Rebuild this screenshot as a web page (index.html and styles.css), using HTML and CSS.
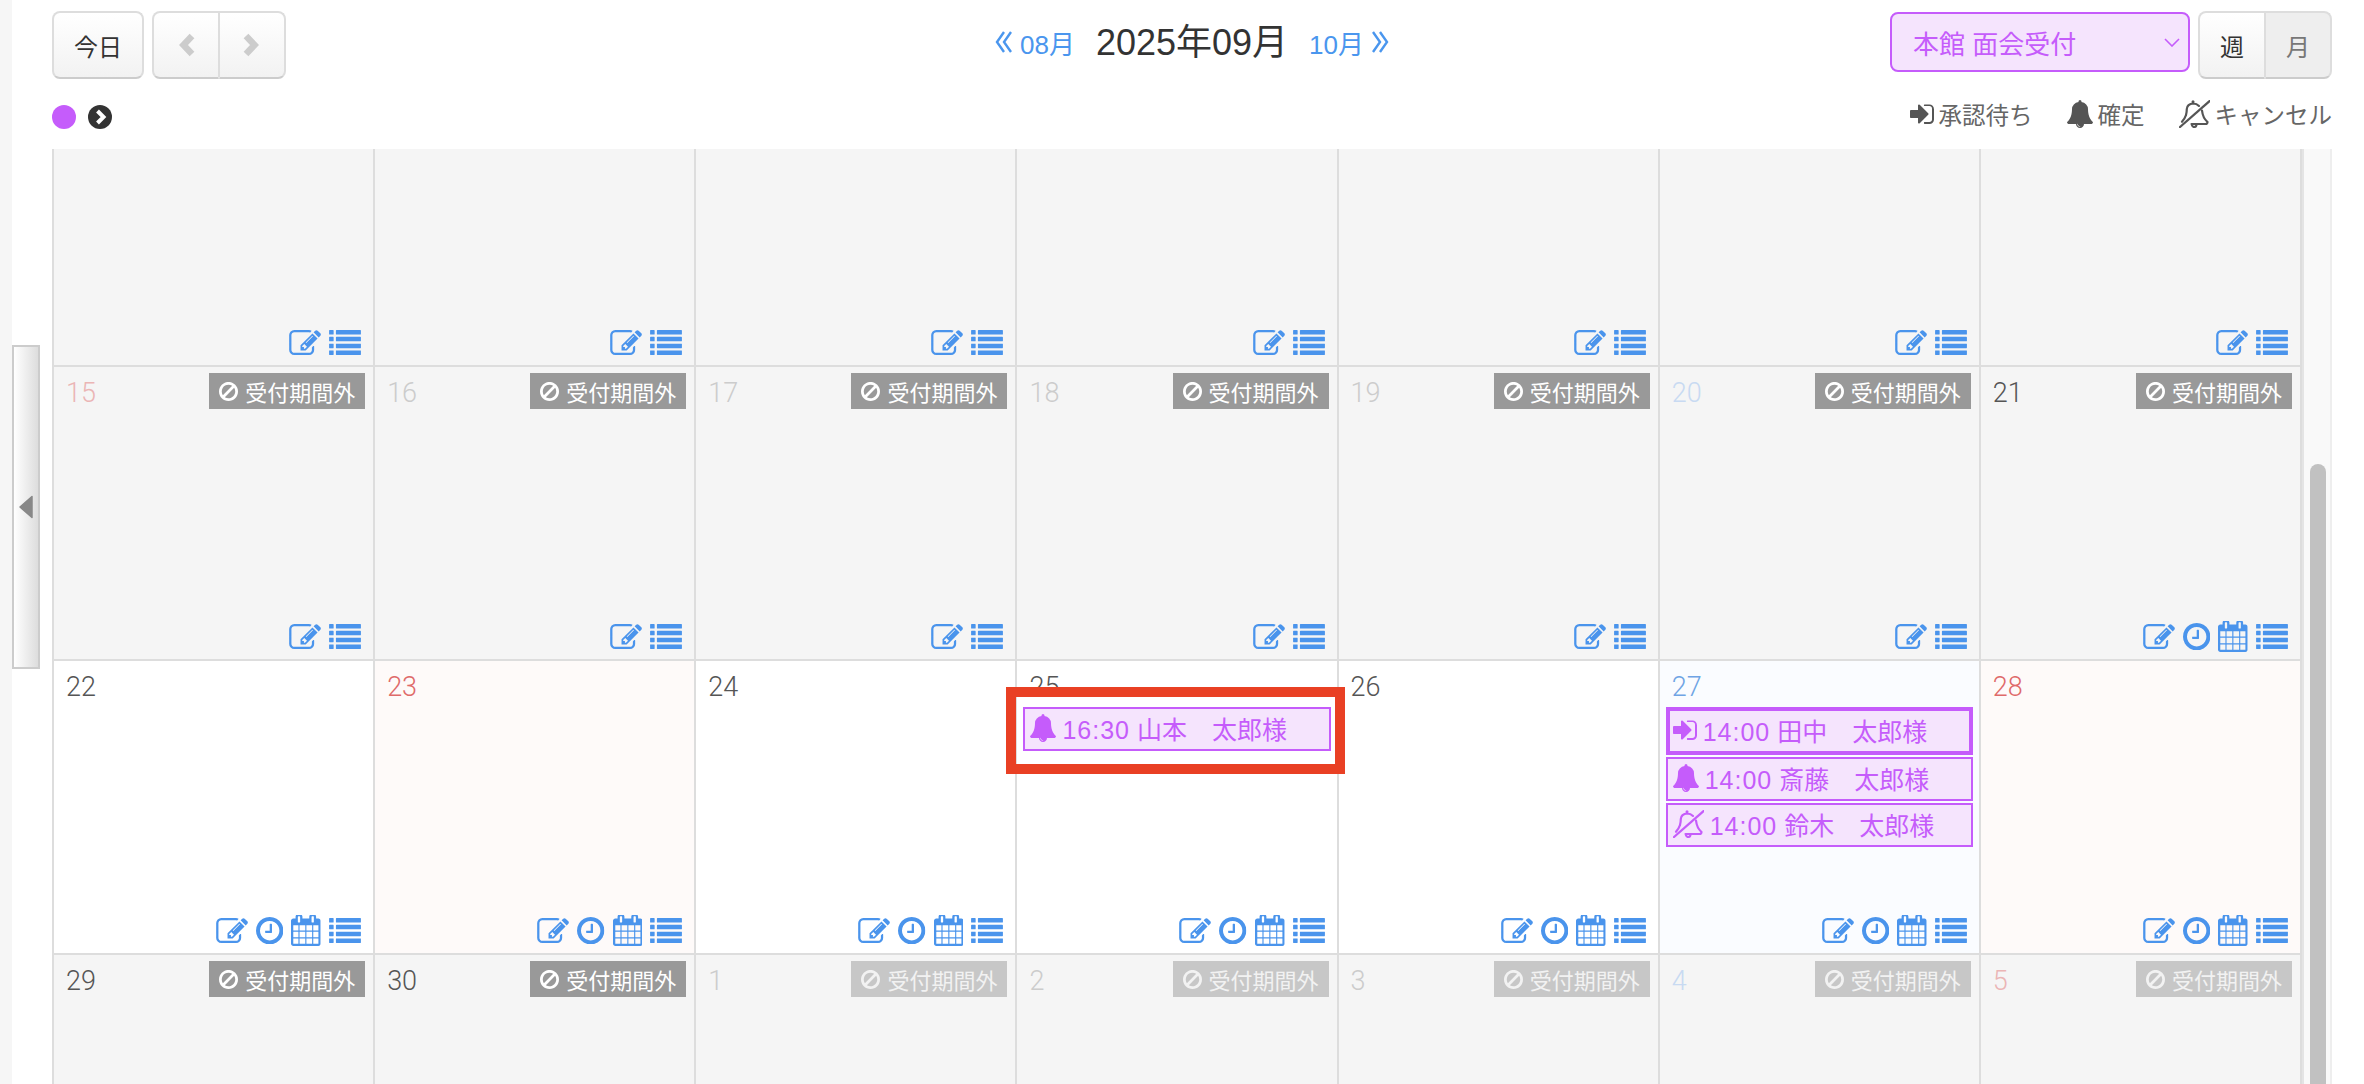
FILE: index.html
```html
<!DOCTYPE html>
<html lang="ja">
<head>
<meta charset="utf-8">
<title>カレンダー</title>
<link rel="stylesheet" href="styles.css">
</head>
<body>
<svg class="sprite" xmlns="http://www.w3.org/2000/svg">
  <symbol id="i-edit" viewBox="0 128 1784 1408"><path d="M888 1184l116-116-152-152-116 116v56h96v96h56zm440-720q-16-16-33 1l-350 350q-17 17-1 33t33-1l350-350q17-17 1-33zm80 594v190q0 119-84.5 203.5t-203.5 84.5h-832q-119 0-203.5-84.5t-84.5-203.5v-832q0-119 84.5-203.5t203.5-84.5h832q63 0 117 25 15 7 18 23 3 17-9 29l-49 49q-14 14-32 8-23-6-45-6h-832q-66 0-113 47t-47 113v832q0 66 47 113t113 47h832q66 0 113-47t47-113v-126q0-13 9-22l64-64q15-15 35-7t20 29zm-96-738l288 288-672 672h-288v-288zm444 132l-92 92-288-288 92-92q28-28 68-28t68 28l152 152q28 28 28 68t-28 68z"/></symbol>
  <symbol id="i-clock" viewBox="128 128 1536 1536"><path d="M1024 544v448q0 14-9 23t-23 9h-320q-14 0-23-9t-9-23v-64q0-14 9-23t23-9h224v-352q0-14 9-23t23-9h64q14 0 23 9t9 23zm416 352q0-148-73-273t-198-198-273-73-273 73-198 198-73 273 73 273 198 198 273 73 273-73 198-198 73-273zm224 0q0 209-103 385.5t-279.5 279.5-385.5 103-385.5-103-279.5-279.5-103-385.5 103-385.5 279.5-279.5 385.5-103 385.5 103 279.5 279.5 103 385.5z"/></symbol>
  <symbol id="i-cal" viewBox="64 64 1664 1728"><path d="M192 1664h288v-288h-288v288zm352 0h320v-288h-320v288zm-352-352h288v-320h-288v320zm352 0h320v-320h-320v320zm-352-384h288v-288h-288v288zm736 736h320v-288h-320v288zm-384-736h320v-288h-320v288zm768 736h288v-288h-288v288zm-384-352h320v-320h-320v320zm-352-864v-288q0-13-9.5-22.5t-22.5-9.5h-64q-13 0-22.5 9.5t-9.5 22.5v288q0 13 9.5 22.5t22.5 9.5h64q13 0 22.5-9.5t9.5-22.5zm736 864h288v-320h-288v320zm-384-384h320v-288h-320v288zm384 0h288v-288h-288v288zm32-480v-288q0-13-9.5-22.5t-22.5-9.5h-64q-13 0-22.5 9.5t-9.5 22.5v288q0 13 9.5 22.5t22.5 9.5h64q13 0 22.5-9.5t9.5-22.5zm384-64v1280q0 52-38 90t-90 38h-1408q-52 0-90-38t-38-90v-1280q0-52 38-90t90-38h128v-96q0-66 47-113t113-47h64q66 0 113 47t47 113v96h384v-96q0-66 47-113t113-47h64q66 0 113 47t47 113v96h128q52 0 90 38t38 90z"/></symbol>
  <symbol id="i-list" viewBox="0 128 1792 1408"><path d="M256 1312v192q0 13-9.5 22.5t-22.5 9.5h-192q-13 0-22.5-9.5t-9.5-22.5v-192q0-13 9.5-22.5t22.5-9.5h192q13 0 22.5 9.5t9.5 22.5zm0-384v192q0 13-9.5 22.5t-22.5 9.5h-192q-13 0-22.5-9.5t-9.5-22.5v-192q0-13 9.5-22.5t22.5-9.5h192q13 0 22.5 9.5t9.5 22.5zm0-384v192q0 13-9.5 22.5t-22.5 9.5h-192q-13 0-22.5-9.5t-9.5-22.5v-192q0-13 9.5-22.5t22.5-9.5h192q13 0 22.5 9.5t9.5 22.5zm1536 768v192q0 13-9.5 22.5t-22.5 9.5h-1344q-13 0-22.5-9.5t-9.5-22.5v-192q0-13 9.5-22.5t22.5-9.5h1344q13 0 22.5 9.5t9.5 22.5zm-1536-1152v192q0 13-9.5 22.5t-22.5 9.5h-192q-13 0-22.5-9.5t-9.5-22.5v-192q0-13 9.5-22.5t22.5-9.5h192q13 0 22.5 9.5t9.5 22.5zm1536 768v192q0 13-9.5 22.5t-22.5 9.5h-1344q-13 0-22.5-9.5t-9.5-22.5v-192q0-13 9.5-22.5t22.5-9.5h1344q13 0 22.5 9.5t9.5 22.5zm0-384v192q0 13-9.5 22.5t-22.5 9.5h-1344q-13 0-22.5-9.5t-9.5-22.5v-192q0-13 9.5-22.5t22.5-9.5h1344q13 0 22.5 9.5t9.5 22.5zm0-384v192q0 13-9.5 22.5t-22.5 9.5h-1344q-13 0-22.5-9.5t-9.5-22.5v-192q0-13 9.5-22.5t22.5-9.5h1344q13 0 22.5 9.5t9.5 22.5z"/></symbol>
  <symbol id="i-ban" viewBox="128 128 1536 1536"><path d="M1440 893q0-161-87-295l-754 753q137 89 297 89 111 0 211.5-43.5t173.5-116.5 116-174.5 43-212.5zm-999 299l755-754q-135-91-300-91-148 0-273 73t-198 199-73 274q0 162 89 299zm1223-299q0 157-61 300t-163.5 246-245 164-298.5 61-298.5-61-245-164-163.5-246-61-300 61-299.5 163.5-245.5 245-164 298.5-61 298.5 61 245 164 163.5 245.5 61 299.5z"/></symbol>
  <symbol id="i-signin" viewBox="0 256 1536 1280"><path d="M1184 896q0 26-19 45l-544 544q-19 19-45 19t-45-19-19-45v-288h-448q-26 0-45-19t-19-45v-384q0-26 19-45t45-19h448v-288q0-26 19-45t45-19 45 19l544 544q19 19 19 45zm352-352v704q0 119-84.5 203.5t-203.5 84.5h-320q-13 0-22.5-9.5t-9.5-22.5q0-4-1-20t-.5-26.5 3-23.5 10-19.5 20.5-6.5h320q66 0 113-47t47-113v-704q0-66-47-113t-113-47h-288-11.5-13-11.5q-8 0-14-2t-10-6-6.5-10-3-11-.5-14 .5-12.5 1-9q0-13 9.5-22.5t22.5-9.5h320q119 0 203.5 84.5t84.5 203.5z"/></symbol>
  <symbol id="i-bell" viewBox="64 0 1664 1792"><path d="M912 1696q0-16-16-16-59 0-101.5-42.5t-42.5-101.5q0-16-16-16t-16 16q0 73 51.5 124.5t124.5 51.5q16 0 16-16zm816-288q0 52-38 90t-90 38h-448q0 106-75 181t-181 75-181-75-75-181h-448q-52 0-90-38t-38-90q50-42 91-88t85-119.5 74.5-158.5 50-206 19.5-260q0-152 117-282.5t307-158.5q-8-19-8-39 0-40 28-68t68-28 68 28 28 68q0 20-8 39 190 28 307 158.5t117 282.5q0 139 19.5 260t50 206 74.5 158.5 85 119.5 91 88z"/></symbol>
  <symbol id="i-bellslash" viewBox="0 0 31 28">
    <g fill="none" stroke="currentColor" stroke-width="2.2" stroke-linecap="round">
      <path d="M7 15c.5-2 .8-4 .8-6C7.800 6 10.500 3.600 14 3.500c2.500 0 4.500 .8 6 2.400"/>
      <path d="M6.800 15.500C6 18 4.500 20.200 3 21.800"/>
      <path d="M23 10.500c.5 4.500 2 8.500 5.500 11.500 0 1-1 2-2 2H12.500"/>
      <path d="M13 25.300c.3 1 1.200 1.700 2.200 1.700s2-.7 2.200-1.700"/>
    </g>
    <circle cx="14" cy="1.800" r="1.500" fill="currentColor"/>
    <path d="M1 27 30.500 1.200" fill="none" stroke="currentColor" stroke-width="2.300" stroke-linecap="round"/>
  </symbol>
</svg>

<aside class="rail">
  <button class="rail-toggle" type="button" aria-label="サイドバーを閉じる">
    <svg class="rail-arrow" viewBox="0 0 14 24"><path d="M13 1.500v21L1 12z" fill="#888" stroke="#888" stroke-width="1.500" stroke-linejoin="round"/></svg>
  </button>
</aside>

<main class="main">
  <header class="topbar">
    <div class="topbar-left">
      <button class="btn btn-today" type="button">今日</button>
      <div class="btn-group">
        <button class="btn seg" type="button" aria-label="前へ"><svg class="nav-chevron" viewBox="0 0 18 26"><path d="M15 4 6.500 13l8.500 9" /></svg></button>
        <button class="btn seg" type="button" aria-label="次へ"><svg class="nav-chevron" viewBox="0 0 18 26"><path d="M3 4l8.500 9L3 22"/></svg></button>
      </div>
    </div>
    <div class="month-nav">
      <a class="month-link" href="#"><svg class="dbl" viewBox="0 0 18 22"><path d="M9 1 2 11l7 10M16 1 9 11l7 10"/></svg>08月</a>
      <h1 class="month-title">2025年09月</h1>
      <a class="month-link" href="#">10月<svg class="dbl" viewBox="0 0 18 22"><path d="M2 1l7 10-7 10M9 1l7 10-7 10"/></svg></a>
    </div>
    <div class="topbar-right">
      <div class="venue-select">本館&nbsp;面会受付<svg class="venue-caret" viewBox="0 0 16 9"><path d="M1 1l7 7 7-7"/></svg></div>
      <div class="btn-group">
        <button class="btn seg seg-view" type="button">週</button>
        <button class="btn seg seg-view seg-off" type="button">月</button>
      </div>
    </div>
  </header>

  <div class="legend-row">
    <div class="legend-dots">
      <span class="dot"></span>
      <svg class="dot-next" viewBox="0 0 24 24"><circle cx="12" cy="12" r="12" fill="#333"/><path d="M9.500 6l6 6-6 6" fill="none" stroke="#fff" stroke-width="4"/></svg>
    </div>
    <ul class="legend">
      <li class="legend-item"><svg class="ic-signin"><use href="#i-signin"/></svg>承認待ち</li>
      <li class="legend-item"><svg class="ic-bell"><use href="#i-bell"/></svg>確定</li>
      <li class="legend-item"><svg class="ic-bellslash"><use href="#i-bellslash"/></svg>キャンセル</li>
    </ul>
  </div>

  <section class="calendar">
    <div class="grid">
      <!-- row 1 -->
      <div class="cell off"><div class="tools"><svg class="ic-edit"><use href="#i-edit"/></svg><svg class="ic-list"><use href="#i-list"/></svg></div></div>
      <div class="cell off"><div class="tools"><svg class="ic-edit"><use href="#i-edit"/></svg><svg class="ic-list"><use href="#i-list"/></svg></div></div>
      <div class="cell off"><div class="tools"><svg class="ic-edit"><use href="#i-edit"/></svg><svg class="ic-list"><use href="#i-list"/></svg></div></div>
      <div class="cell off"><div class="tools"><svg class="ic-edit"><use href="#i-edit"/></svg><svg class="ic-list"><use href="#i-list"/></svg></div></div>
      <div class="cell off"><div class="tools"><svg class="ic-edit"><use href="#i-edit"/></svg><svg class="ic-list"><use href="#i-list"/></svg></div></div>
      <div class="cell off"><div class="tools"><svg class="ic-edit"><use href="#i-edit"/></svg><svg class="ic-list"><use href="#i-list"/></svg></div></div>
      <div class="cell off"><div class="tools"><svg class="ic-edit"><use href="#i-edit"/></svg><svg class="ic-list"><use href="#i-list"/></svg></div></div>

      <!-- row 2 -->
      <div class="cell off"><div class="head"><span class="date sun-dim">15</span><span class="badge"><svg class="ic-ban"><use href="#i-ban"/></svg>受付期間外</span></div><div class="tools"><svg class="ic-edit"><use href="#i-edit"/></svg><svg class="ic-list"><use href="#i-list"/></svg></div></div>
      <div class="cell off"><div class="head"><span class="date dim">16</span><span class="badge"><svg class="ic-ban"><use href="#i-ban"/></svg>受付期間外</span></div><div class="tools"><svg class="ic-edit"><use href="#i-edit"/></svg><svg class="ic-list"><use href="#i-list"/></svg></div></div>
      <div class="cell off"><div class="head"><span class="date dim">17</span><span class="badge"><svg class="ic-ban"><use href="#i-ban"/></svg>受付期間外</span></div><div class="tools"><svg class="ic-edit"><use href="#i-edit"/></svg><svg class="ic-list"><use href="#i-list"/></svg></div></div>
      <div class="cell off"><div class="head"><span class="date dim">18</span><span class="badge"><svg class="ic-ban"><use href="#i-ban"/></svg>受付期間外</span></div><div class="tools"><svg class="ic-edit"><use href="#i-edit"/></svg><svg class="ic-list"><use href="#i-list"/></svg></div></div>
      <div class="cell off"><div class="head"><span class="date dim">19</span><span class="badge"><svg class="ic-ban"><use href="#i-ban"/></svg>受付期間外</span></div><div class="tools"><svg class="ic-edit"><use href="#i-edit"/></svg><svg class="ic-list"><use href="#i-list"/></svg></div></div>
      <div class="cell off"><div class="head"><span class="date sat-dim">20</span><span class="badge"><svg class="ic-ban"><use href="#i-ban"/></svg>受付期間外</span></div><div class="tools"><svg class="ic-edit"><use href="#i-edit"/></svg><svg class="ic-list"><use href="#i-list"/></svg></div></div>
      <div class="cell off"><div class="head"><span class="date">21</span><span class="badge"><svg class="ic-ban"><use href="#i-ban"/></svg>受付期間外</span></div><div class="tools"><svg class="ic-edit"><use href="#i-edit"/></svg><svg class="ic-clock"><use href="#i-clock"/></svg><svg class="ic-cal"><use href="#i-cal"/></svg><svg class="ic-list"><use href="#i-list"/></svg></div></div>

      <!-- row 3 -->
      <div class="cell"><div class="head"><span class="date">22</span></div><div class="tools"><svg class="ic-edit"><use href="#i-edit"/></svg><svg class="ic-clock"><use href="#i-clock"/></svg><svg class="ic-cal"><use href="#i-cal"/></svg><svg class="ic-list"><use href="#i-list"/></svg></div></div>
      <div class="cell holiday"><div class="head"><span class="date red">23</span></div><div class="tools"><svg class="ic-edit"><use href="#i-edit"/></svg><svg class="ic-clock"><use href="#i-clock"/></svg><svg class="ic-cal"><use href="#i-cal"/></svg><svg class="ic-list"><use href="#i-list"/></svg></div></div>
      <div class="cell"><div class="head"><span class="date">24</span></div><div class="tools"><svg class="ic-edit"><use href="#i-edit"/></svg><svg class="ic-clock"><use href="#i-clock"/></svg><svg class="ic-cal"><use href="#i-cal"/></svg><svg class="ic-list"><use href="#i-list"/></svg></div></div>
      <div class="cell"><div class="head"><span class="date">25</span></div>
        <div class="event"><svg class="ic-bell"><use href="#i-bell"/></svg><span><span class="time">16:30</span> 山本　太郎様</span></div>
        <div class="highlight"></div>
        <div class="tools"><svg class="ic-edit"><use href="#i-edit"/></svg><svg class="ic-clock"><use href="#i-clock"/></svg><svg class="ic-cal"><use href="#i-cal"/></svg><svg class="ic-list"><use href="#i-list"/></svg></div></div>
      <div class="cell"><div class="head"><span class="date">26</span></div><div class="tools"><svg class="ic-edit"><use href="#i-edit"/></svg><svg class="ic-clock"><use href="#i-clock"/></svg><svg class="ic-cal"><use href="#i-cal"/></svg><svg class="ic-list"><use href="#i-list"/></svg></div></div>
      <div class="cell saturday"><div class="head"><span class="date blue">27</span></div>
        <div class="event event-pending"><svg class="ic-signin"><use href="#i-signin"/></svg><span><span class="time">14:00</span> 田中　太郎様</span></div>
        <div class="event"><svg class="ic-bell"><use href="#i-bell"/></svg><span><span class="time">14:00</span> 斎藤　太郎様</span></div>
        <div class="event"><svg class="ic-bellslash"><use href="#i-bellslash"/></svg><span><span class="time">14:00</span> 鈴木　太郎様</span></div>
        <div class="tools"><svg class="ic-edit"><use href="#i-edit"/></svg><svg class="ic-clock"><use href="#i-clock"/></svg><svg class="ic-cal"><use href="#i-cal"/></svg><svg class="ic-list"><use href="#i-list"/></svg></div></div>
      <div class="cell holiday"><div class="head"><span class="date red">28</span></div><div class="tools"><svg class="ic-edit"><use href="#i-edit"/></svg><svg class="ic-clock"><use href="#i-clock"/></svg><svg class="ic-cal"><use href="#i-cal"/></svg><svg class="ic-list"><use href="#i-list"/></svg></div></div>

      <!-- row 4 -->
      <div class="cell off"><div class="head"><span class="date">29</span><span class="badge"><svg class="ic-ban"><use href="#i-ban"/></svg>受付期間外</span></div></div>
      <div class="cell off"><div class="head"><span class="date">30</span><span class="badge"><svg class="ic-ban"><use href="#i-ban"/></svg>受付期間外</span></div></div>
      <div class="cell off"><div class="head"><span class="date dim">1</span><span class="badge badge-dim"><svg class="ic-ban"><use href="#i-ban"/></svg>受付期間外</span></div></div>
      <div class="cell off"><div class="head"><span class="date dim">2</span><span class="badge badge-dim"><svg class="ic-ban"><use href="#i-ban"/></svg>受付期間外</span></div></div>
      <div class="cell off"><div class="head"><span class="date dim">3</span><span class="badge badge-dim"><svg class="ic-ban"><use href="#i-ban"/></svg>受付期間外</span></div></div>
      <div class="cell off"><div class="head"><span class="date sat-dim">4</span><span class="badge badge-dim"><svg class="ic-ban"><use href="#i-ban"/></svg>受付期間外</span></div></div>
      <div class="cell off"><div class="head"><span class="date sun-dim">5</span><span class="badge badge-dim"><svg class="ic-ban"><use href="#i-ban"/></svg>受付期間外</span></div></div>
    </div>
    <div class="scrollbar"><div class="thumb"></div></div>
  </section>
</main>
</body>
</html>
```

FILE: styles.css
```css
* { box-sizing: border-box; }

html, body { height: 100%; }

body {
  margin: 0;
  height: 1084px;
  overflow: hidden;
  display: flex;
  background: #fff;
  color: #333;
  font-family: "Liberation Sans", "Noto Sans CJK JP", sans-serif;
}

.sprite { display: none; }

/* side rail */
.rail {
  position: relative;
  width: 12px;
  flex: none;
  background: #f6f6f6;
}

.rail-toggle {
  position: absolute;
  left: 12px;
  top: 345px;
  width: 28px;
  height: 324px;
  padding: 0;
  display: flex;
  align-items: center;
  justify-content: center;
  border: 2px solid #ccc;
  background: linear-gradient(to right, #fff, #ddd);
}

.rail-arrow { width: 14px; height: 24px; }

/* main */
.main {
  flex: 1;
  min-width: 0;
  padding: 11px 32px 0 40px;
  display: flex;
  flex-direction: column;
}

.topbar {
  display: grid;
  grid-template-columns: 1fr auto 1fr;
  align-items: start;
  height: 68px;
}

.topbar-left { display: flex; gap: 8px; }

.topbar-right {
  display: flex;
  justify-content: flex-end;
  gap: 8px;
}

.btn {
  height: 68px;
  padding: 0;
  font: inherit;
  font-size: 24px;
  color: #333;
  border: 2px solid #ddd;
  border-bottom-color: #ccc;
  background: linear-gradient(to bottom, #fff, #f2f2f2);
  border-radius: 8px;
}

.btn-today { width: 92px; }

.btn-group { display: flex; }

.seg {
  width: 67px;
  border-radius: 0;
  display: flex;
  align-items: center;
  justify-content: center;
}

.seg:first-child { border-radius: 8px 0 0 8px; border-right-width: 1px; }
.seg:last-child { border-radius: 0 8px 8px 0; border-left-width: 1px; }

.seg-off { background: #eee; color: #777; }

.nav-chevron {
  width: 18px;
  height: 26px;
  fill: none;
  stroke: #ccc;
  stroke-width: 6.5;
}

.month-nav {
  display: flex;
  align-items: center;
  gap: 21px;
  height: 56px;
}

.month-link {
  display: flex;
  align-items: center;
  gap: 7px;
  margin-top: 6px;
  color: #4a96ee;
  font-size: 26px;
  text-decoration: none;
}

.dbl {
  width: 18px;
  height: 22px;
  fill: none;
  stroke: #4a96ee;
  stroke-width: 2.4;
}

.month-title {
  margin: 0;
  font-size: 36px;
  font-weight: 400;
  color: #333;
}

.venue-select {
  position: relative;
  width: 300px;
  height: 60px;
  margin-top: 1px;
  padding-left: 21px;
  display: flex;
  align-items: center;
  font-size: 26px;
  color: #c55cfb;
  background: #f5e4fd;
  border: 2px solid #c55cfb;
  border-radius: 8px;
}

.venue-caret {
  position: absolute;
  right: 8px;
  top: 24px;
  width: 16px;
  height: 9px;
  fill: none;
  stroke: #c55cfb;
  stroke-width: 1.6;
}

/* legend */
.legend-row {
  display: flex;
  justify-content: space-between;
  height: 36px;
  margin: 20px 0 14px;
}

.legend-dots {
  display: flex;
  align-items: center;
  gap: 12px;
}

.dot {
  width: 24px;
  height: 24px;
  border-radius: 50%;
  background: #c55cfb;
}

.dot-next { width: 24px; height: 24px; }

.legend {
  display: flex;
  gap: 34px;
  margin: 0;
  padding: 0;
  list-style: none;
  height: 30px;
}

.legend-item {
  display: flex;
  align-items: center;
  gap: 5px;
  font-size: 23.5px;
  color: #666;
}

.legend-item svg { color: #555; }

.ic-signin, .ic-bell, .ic-bellslash { flex: none; fill: currentColor; }
.ic-signin { width: 24px; height: 20px; }
.ic-bell { width: 26px; height: 28px; }
.ic-bellslash { width: 31px; height: 28px; }

/* calendar */
.calendar {
  flex: 1;
  min-height: 0;
  display: flex;
  overflow: hidden;
}

.grid {
  width: 2250px;
  flex: none;
  display: grid;
  grid-template-columns: repeat(7, 1fr);
  grid-template-rows: 218px 294px 294px 294px;
  border-left: 2px solid #ddd;
}

.cell {
  position: relative;
  display: flex;
  flex-direction: column;
  border-right: 2px solid #ddd;
  border-bottom: 2px solid #ddd;
  background: #fff;
}

.cell.off { background: #f5f5f5; }
.cell.holiday { background: #fefaf9; }
.cell.saturday { background: #fafcff; }

.head {
  display: flex;
  justify-content: space-between;
  align-items: flex-start;
  height: 46px;
  padding: 6px 8px 0 12px;
}

.date {
  padding-top: 7px;
  font-family: Roboto, "Liberation Sans", sans-serif;
  font-weight: 300;
  font-size: 27px;
  line-height: 27px;
  color: #555;
}

.dim { color: #ccc; }
.sun-dim { color: #ebb5b5; }
.sat-dim { color: #c8daf2; }
.red { color: #df6a6a; }
.blue { color: #6fa4e4; }

.badge {
  display: flex;
  align-items: center;
  gap: 7px;
  height: 36px;
  padding: 0 10px;
  font-size: 22px;
  color: #fff;
  background: #999;
  fill: #fff;
}

.badge-dim { background: #c7c7c7; color: #f2f2f2; fill: #f2f2f2; }

.ic-ban { width: 19px; height: 19px; }

.event {
  display: flex;
  align-items: center;
  gap: 6px;
  height: 44px;
  margin: 0 6px 2px 6px;
  padding: 0 0 2px 5px;
  font-size: 25px;
  white-space: pre;
  color: #c55cfb;
  background: #f5e4fd;
  border: 2px solid #c55cfb;
}

.event-pending { height: 48px; border-width: 4px; padding-left: 3px; }

.time { letter-spacing: 1px; }

.highlight {
  position: absolute;
  left: -11px;
  top: 26px;
  width: 339px;
  height: 87px;
  border: 10px solid #e94024;
  z-index: 2;
}

.tools {
  margin-top: auto;
  display: flex;
  justify-content: flex-end;
  align-items: center;
  gap: 8px;
  padding: 0 12px 7px 0;
  height: 38px;
  color: #4a94ec;
  fill: #4a94ec;
}

.ic-edit { width: 32px; height: 25px; }
.ic-clock { width: 27.4px; height: 27.4px; }
.ic-cal { width: 29.700px; height: 31px; margin-bottom: 1px; }
.ic-list { width: 32px; height: 25px; }

/* scrollbar */
.scrollbar {
  width: 30px;
  flex: none;
  padding-left: 6px;
  background: #f9f9f9;
  border-left: 2px solid #e4e4e4;
  border-right: 2px solid #eee;
}

.thumb {
  width: 16px;
  height: 700px;
  margin-top: 315px;
  border-radius: 8px;
  background: #c1c1c1;
}
```
